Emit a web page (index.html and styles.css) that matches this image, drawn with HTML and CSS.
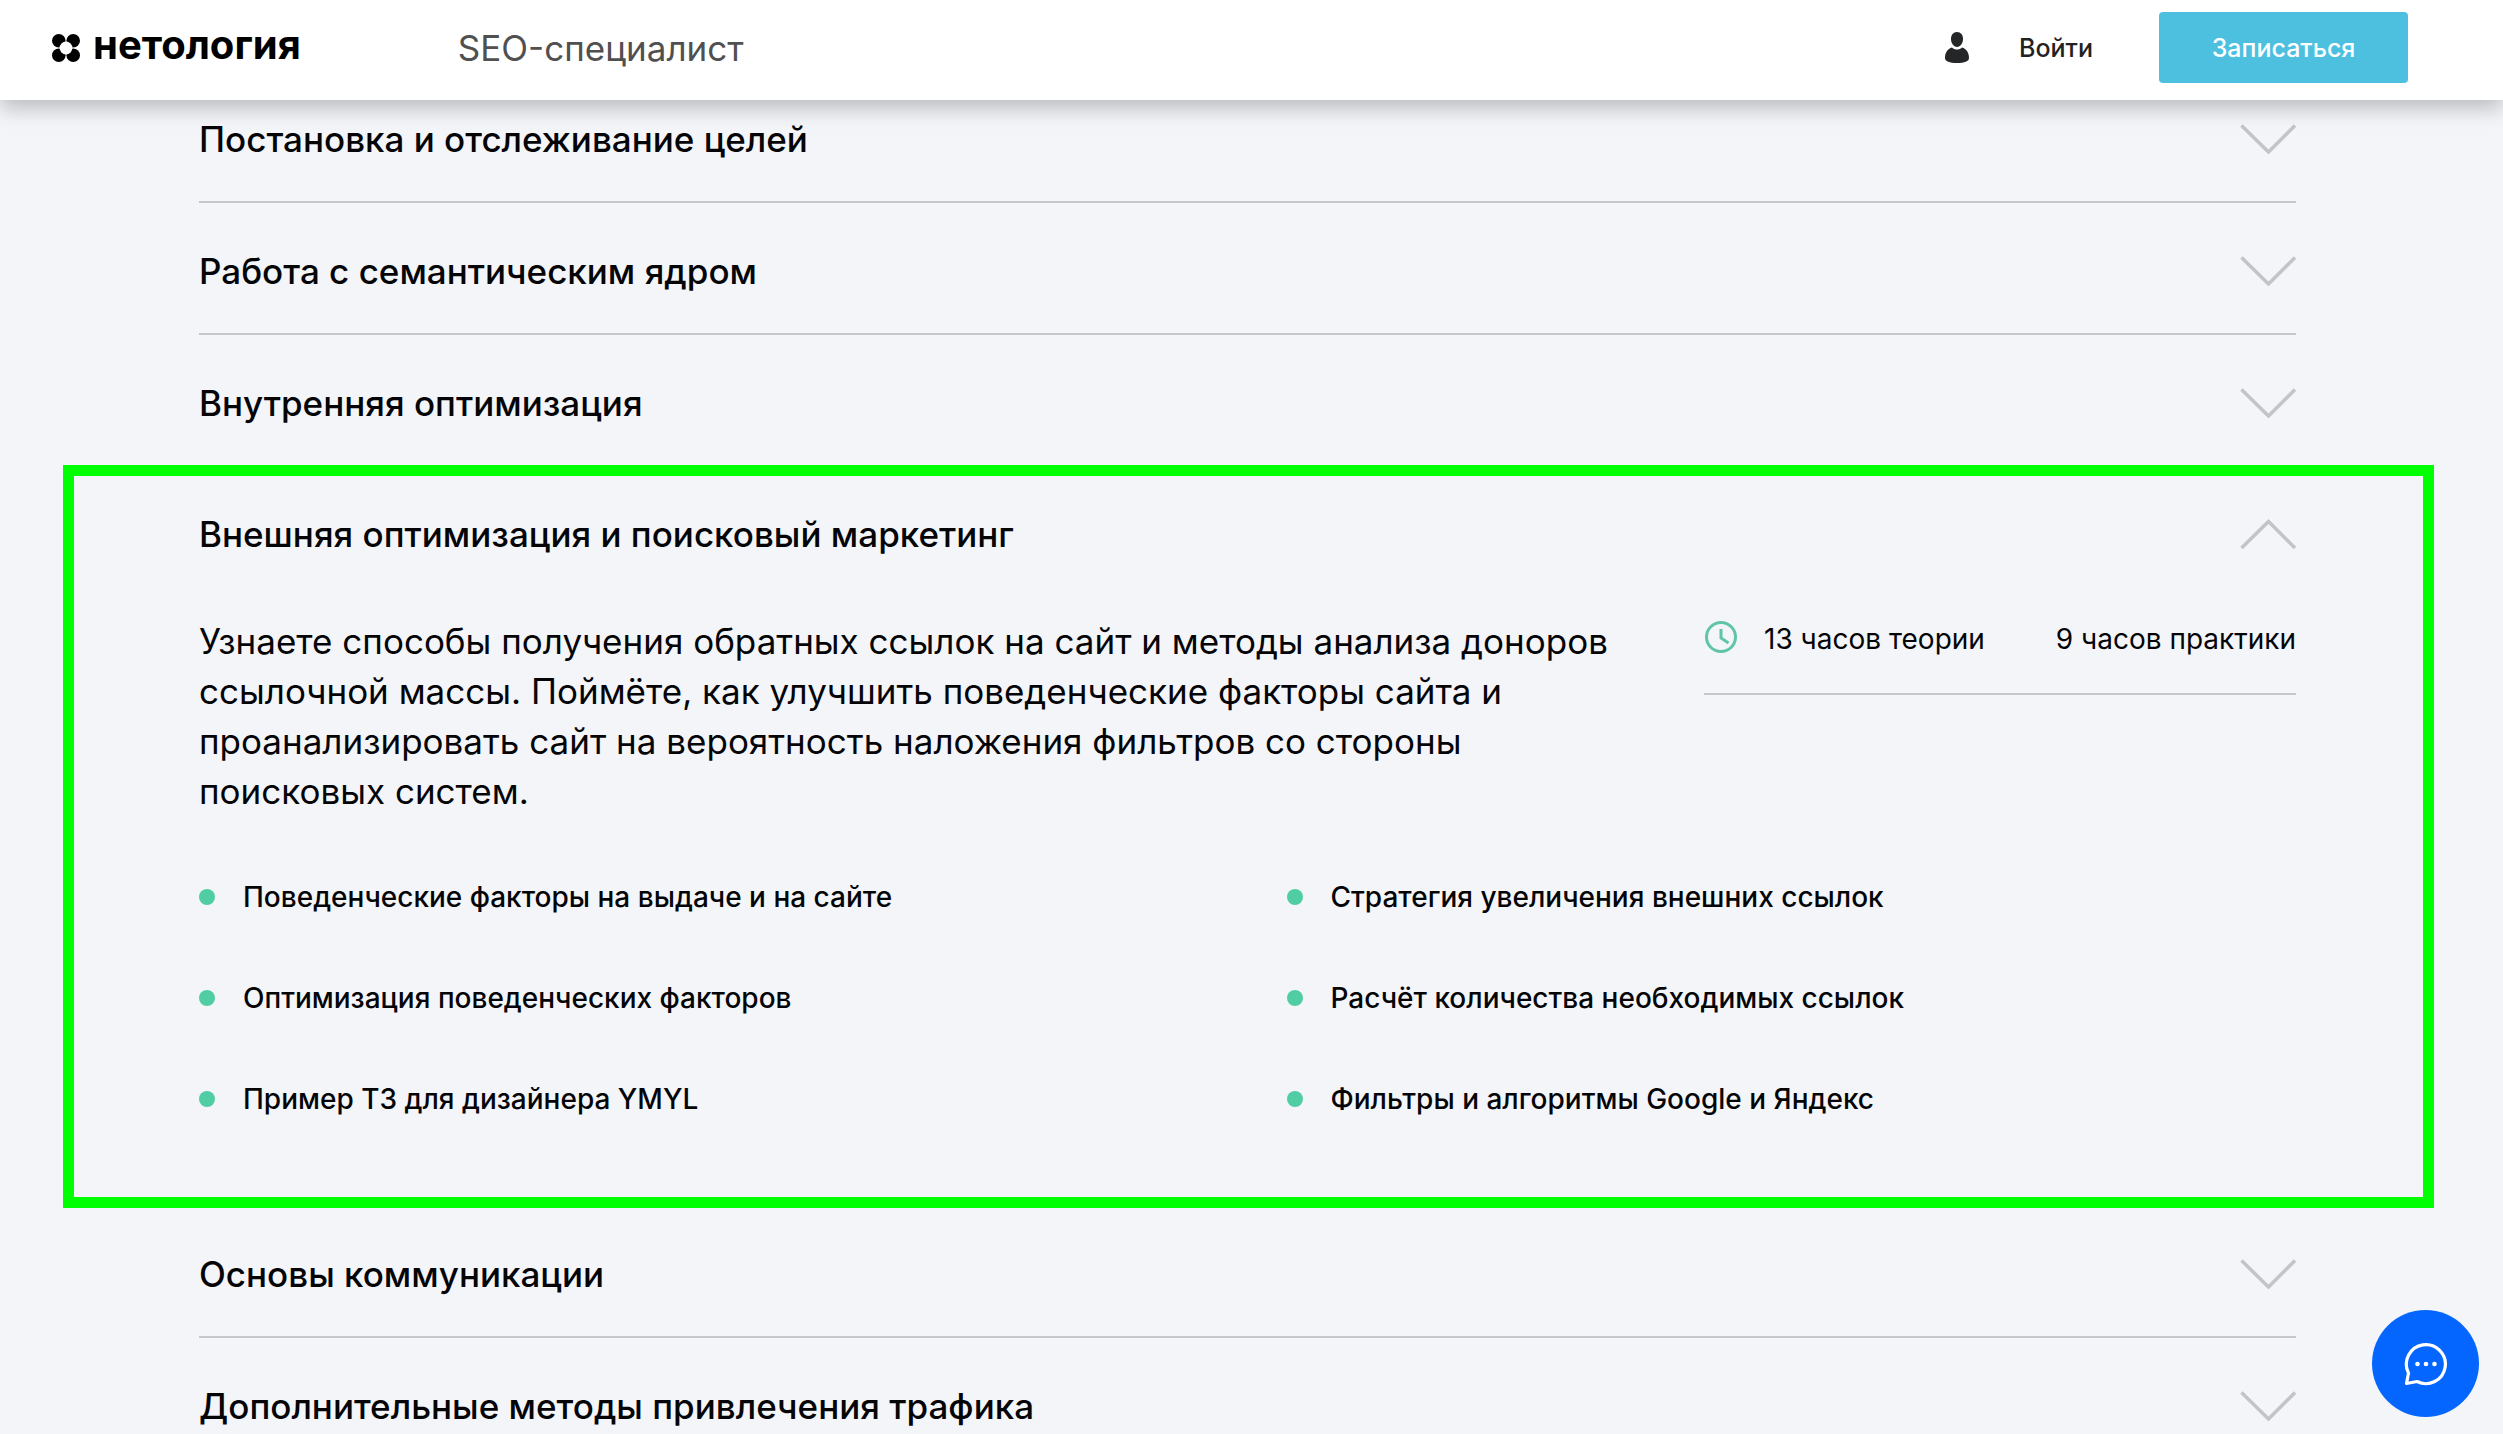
FILE: index.html
```html
<!DOCTYPE html>
<html lang="ru">
<head>
  <meta charset="utf-8">
  <meta name="viewport" content="width=device-width, initial-scale=1">
  <title>SEO-специалист — Нетология</title>
  <link rel="stylesheet" href="styles.css">
</head>
<body>
  <svg class="sprite" aria-hidden="true">
    <symbol id="chevron-down" viewBox="0 0 56 30">
      <path d="M1.500 1.500 28.500 28 55 1.500" fill="none" stroke="#c3c4c8" stroke-width="3.500"/>
    </symbol>
    <symbol id="chevron-up" viewBox="0 0 56 30">
      <path d="M1.500 29 28.500 2.500 55 29" fill="none" stroke="#c3c4c8" stroke-width="3.500"/>
    </symbol>
  </svg>

  <header class="header">
    <a class="logo" href="#">
      <svg class="logo-icon" viewBox="0 0 30 30" aria-hidden="true">
        <circle cx="7.8" cy="7.8" r="6.8"/>
        <circle cx="22.2" cy="7.8" r="6.8"/>
        <circle cx="7.8" cy="22.2" r="6.8"/>
        <circle cx="22.2" cy="22.2" r="6.8"/>
        <circle cx="15" cy="15" r="6.4" fill="#fff"/>
      </svg>
      <span class="logo-text">нетология</span>
    </a>
    <p class="course">SEO-специалист</p>
    <nav class="account">
      <a class="login" href="#">
        <svg class="user-icon" viewBox="0 0 24 32" aria-hidden="true">
          <path d="M12 0c3.800 0 6 3 6 7s-2.600 8-6 8-6-4-6-8 2.200-7 6-7z"/>
          <path d="M7 15.600c1.500 1.400 3 2 5 2s3.500-.6 5-2c4.500 1.200 7 5.400 7 10.400 0 3.500-4.500 5-12 5S0 29.500 0 26c0-5 2.500-9.200 7-10.400z"/>
        </svg>
        <span>Войти</span>
      </a>
      <button class="enroll" type="button">Записаться</button>
    </nav>
  </header>

  <main class="program">
    <h2 class="row"><button class="row-button" type="button" aria-expanded="false">Постановка и отслеживание целей<svg class="chevron" aria-hidden="true"><use href="#chevron-down"/></svg></button></h2>
    <h2 class="row"><button class="row-button" type="button" aria-expanded="false">Работа с семантическим ядром<svg class="chevron" aria-hidden="true"><use href="#chevron-down"/></svg></button></h2>
    <h2 class="row row-plain"><button class="row-button" type="button" aria-expanded="false">Внутренняя оптимизация<svg class="chevron" aria-hidden="true"><use href="#chevron-down"/></svg></button></h2>

    <section class="panel">
      <h2 class="panel-title"><button class="row-button" type="button" aria-expanded="true">Внешняя оптимизация и поисковый маркетинг<svg class="chevron" aria-hidden="true"><use href="#chevron-up"/></svg></button></h2>
      <div class="summary">
        <p class="description">Узнаете способы получения обратных ссылок на сайт и методы анализа доноров ссылочной массы. Поймёте, как улучшить поведенческие факторы сайта и проанализировать сайт на вероятность наложения фильтров со стороны поисковых систем.</p>
        <div class="hours">
          <svg class="clock" viewBox="0 0 34 34" fill="none" stroke="#5fc5a4" stroke-width="3" aria-hidden="true">
            <circle cx="17" cy="17" r="14.500"/>
            <path d="M17 9v9l7.500 5"/>
          </svg>
          <span>13 часов теории</span>
          <span class="practice">9 часов практики</span>
        </div>
      </div>
      <ul class="topics">
        <li>Поведенческие факторы на выдаче и на сайте</li>
        <li>Стратегия увеличения внешних ссылок</li>
        <li>Оптимизация поведенческих факторов</li>
        <li>Расчёт количества необходимых ссылок</li>
        <li>Пример ТЗ для дизайнера YMYL</li>
        <li>Фильтры и алгоритмы Google и Яндекс</li>
      </ul>
    </section>

    <h2 class="row"><button class="row-button" type="button" aria-expanded="false">Основы коммуникации<svg class="chevron" aria-hidden="true"><use href="#chevron-down"/></svg></button></h2>
    <h2 class="row row-last"><button class="row-button" type="button" aria-expanded="false">Дополнительные методы привлечения трафика<svg class="chevron" aria-hidden="true"><use href="#chevron-down"/></svg></button></h2>
  </main>

  <button class="chat" type="button" aria-label="Открыть чат">
    <svg class="chat-icon" viewBox="0 0 44 44" aria-hidden="true">
      <path d="M4.500 31A19.500 19.500 0 1 1 13 39.500L2.500 41.500Z" fill="none" stroke="#fff" stroke-width="3.200" stroke-linejoin="round"/>
      <g fill="#fff"><circle cx="13.500" cy="22" r="2.300"/><circle cx="22" cy="22" r="2.300"/><circle cx="30.500" cy="22" r="2.300"/></g>
    </svg>
  </button>
</body>
</html>
```
FILE: styles.css
```css
* {
  box-sizing: border-box;
}

body {
  margin: 0;
  background: #f3f5f9;
  color: #050507;
  font-family: Inter, "Liberation Sans", sans-serif;
}

h2,
p,
ul {
  margin: 0;
  padding: 0;
}

a {
  color: inherit;
  text-decoration: none;
}

button {
  border: 0;
  padding: 0;
  background: none;
  color: inherit;
  font: inherit;
  cursor: pointer;
}

.sprite {
  position: absolute;
  width: 0;
  height: 0;
}

/* Header */

.header {
  position: sticky;
  top: 0;
  z-index: 2;
  display: flex;
  align-items: center;
  height: 100px;
  padding: 12px 95px 17px 51px;
  background: #fff;
  box-shadow: 0 8px 20px rgba(0, 0, 0, 0.24);
}

.logo {
  display: flex;
  align-items: center;
  gap: 12px;
}

.logo-icon {
  width: 30px;
  height: 30px;
}

.logo-text {
  padding-bottom: 6px;
  color: #000;
  font-size: 40px;
  font-weight: 700;
  line-height: 48px;
}

.course {
  margin-left: 157px;
  color: #505050;
  font-size: 35px;
}

.account {
  display: flex;
  align-items: center;
  gap: 66px;
  margin-left: auto;
}

.login {
  display: flex;
  align-items: center;
  gap: 50px;
  color: #222;
  font-size: 25px;
  font-weight: 500;
}

.user-icon {
  width: 24px;
  height: 32px;
  fill: #242628;
}

.enroll {
  width: 249px;
  height: 71px;
  border-radius: 4px;
  background: #4dc0e0;
  color: #fff;
  font-size: 25px;
  font-weight: 500;
}

/* Course programme */

.program {
  margin-top: -29px;
  padding: 0 207px 0 199px;
}

.row,
.panel-title {
  font-size: 35px;
  font-weight: 500;
  line-height: 44px;
}

.row {
  padding: 46px 0 40px;
  border-bottom: 2px solid #c6c7cc;
}

.row-plain {
  border-bottom: 0;
}

.row-last {
  padding-bottom: 0;
  border-bottom: 0;
}

.row-button {
  display: flex;
  align-items: center;
  justify-content: space-between;
  width: 100%;
  text-align: left;
}

.chevron {
  width: 56px;
  height: 30px;
}

.panel {
  margin: 0 -138px -2px -136px;
  padding: 36px 127px 77px 125px;
  border: 11px solid #0f0;
}

.summary {
  display: flex;
  align-items: flex-start;
  justify-content: space-between;
  gap: 78px;
  margin-top: 60px;
}

.description {
  flex: 1;
  font-size: 35px;
  line-height: 50px;
}

.hours {
  display: flex;
  align-items: center;
  width: 592px;
  padding-bottom: 31px;
  border-bottom: 2px solid #c6c7cc;
  font-size: 28px;
  line-height: 46px;
}

.clock {
  width: 34px;
  height: 34px;
  margin: 0 26px 4px 0;
}

.practice {
  margin-left: auto;
}

.topics {
  display: grid;
  grid-template-columns: 1fr 1fr;
  gap: 59px 78px;
  margin-top: 60px;
  font-size: 28px;
  font-weight: 500;
  line-height: 42px;
  list-style: none;
}

.topics li {
  display: flex;
  align-items: center;
  gap: 28px;
}

.topics li::before {
  content: "";
  width: 16px;
  height: 16px;
  border-radius: 50%;
  background: #50cda3;
}

/* Chat launcher */

.chat {
  position: fixed;
  right: 24px;
  bottom: 17px;
  z-index: 3;
  display: grid;
  place-items: center;
  width: 107px;
  height: 107px;
  border-radius: 50%;
  background: #0566ff;
}

.chat-icon {
  width: 44px;
  height: 44px;
}
```
